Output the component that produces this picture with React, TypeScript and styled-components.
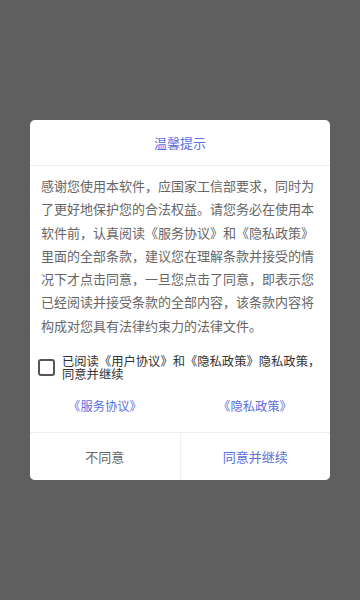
import React, { useState } from 'react';
import styled, { createGlobalStyle } from 'styled-components';

const GlobalStyle = createGlobalStyle`
  html, body, #root {
    margin: 0;
    padding: 0;
    height: 100%;
  }
  body {
    background: #5f5f5f;
    font-family: "Noto Sans CJK SC", "Noto Sans", sans-serif;
  }
`;

const Overlay = styled.div`
  min-height: 600px;
  display: flex;
  justify-content: center;
  align-items: flex-start;
  padding-top: 120px;
  box-sizing: border-box;
`;

const Dialog = styled.div`
  width: 300px;
  height: 360px;
  background: #fff;
  border-radius: 5px;
  display: flex;
  flex-direction: column;
  overflow: hidden;
`;

const Title = styled.div`
  height: 45px;
  display: flex;
  align-items: center;
  justify-content: center;
  font-size: 13px;
  color: #5a6fe0;
  border-bottom: 1px solid #eeeeee;
`;

const Body = styled.p`
  margin: 0;
  padding: 8px 9px 0 11px;
  font-size: 13px;
  line-height: 23.3px;
  color: #666;
`;

const CheckRow = styled.label`
  display: flex;
  align-items: center;
  gap: 7px;
  margin-top: 18px;
  padding: 0 4px 0 8px;
  cursor: pointer;
`;

const Box = styled.span<{ $checked: boolean }>`
  flex: none;
  width: 17px;
  height: 17px;
  box-sizing: border-box;
  border: 2px solid #555;
  border-radius: 3px;
  background: ${(p) => (p.$checked ? '#5a6fe0' : '#fff')};
  border-color: ${(p) => (p.$checked ? '#5a6fe0' : '#555')};
`;

const CheckText = styled.span`
  font-size: 12.3px;
  line-height: 12.5px;
  color: #333;
`;

const Links = styled.div`
  flex: 1;
  display: flex;
  align-items: center;
`;

const Link = styled.a`
  flex: 1;
  text-align: center;
  font-size: 12.3px;
  color: #5a6fe0;
  text-decoration: none;
  cursor: pointer;
`;

const Footer = styled.div`
  height: 47px;
  display: flex;
  border-top: 1px solid #eeeeee;
`;

const Button = styled.button<{ $primary?: boolean }>`
  flex: 1;
  border: none;
  background: #fff;
  font-family: inherit;
  font-size: 13px;
  color: ${(p) => (p.$primary ? '#5a6fe0' : '#666')};
  cursor: pointer;
  & + & {
    border-left: 1px solid #eeeeee;
  }
`;

export default function App() {
  const [checked, setChecked] = useState(false);

  return (
    <>
      <GlobalStyle />
      <Overlay>
        <Dialog>
          <Title>温馨提示</Title>
          <Body>
            感谢您使用本软件，应国家工信部要求，同时为了更好地保护您的合法权益。请您务必在使用本软件前，认真阅读《服务协议》和《隐私政策》里面的全部条款，建议您在理解条款并接受的情况下才点击同意，一旦您点击了同意，即表示您已经阅读并接受条款的全部内容，该条款内容将构成对您具有法律约束力的法律文件。
          </Body>
          <CheckRow onClick={() => setChecked(!checked)}>
            <Box $checked={checked} />
            <CheckText>已阅读《用户协议》和《隐私政策》隐私政策，同意并继续</CheckText>
          </CheckRow>
          <Links>
            <Link>《服务协议》</Link>
            <Link>《隐私政策》</Link>
          </Links>
          <Footer>
            <Button>不同意</Button>
            <Button $primary>同意并继续</Button>
          </Footer>
        </Dialog>
      </Overlay>
    </>
  );
}
